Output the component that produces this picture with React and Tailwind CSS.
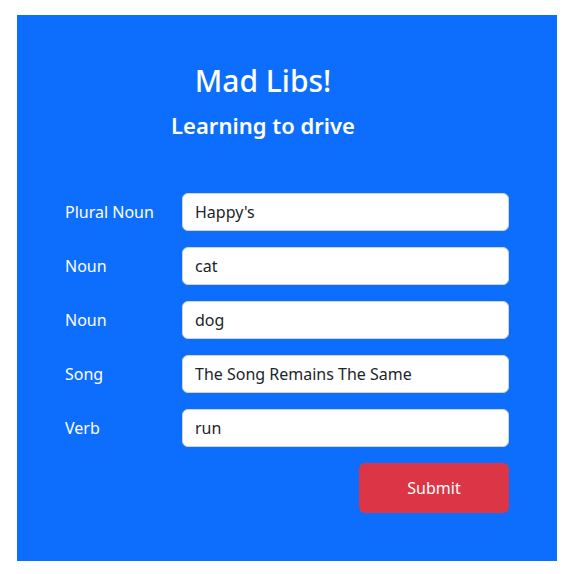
import { useState } from 'react'

const FIELDS = [
  { label: 'Plural Noun', value: "Happy's" },
  { label: 'Noun', value: 'cat' },
  { label: 'Noun', value: 'dog' },
  { label: 'Song', value: 'The Song Remains The Same' },
  { label: 'Verb', value: 'run' },
]

export default function App() {
  const [values, setValues] = useState(FIELDS.map(f => f.value))

  return (
    <div className="min-h-screen bg-white pt-[15px] pl-[17px] font-['Noto_Sans',sans-serif]">
      <div className="w-[540px] h-[546px] bg-[#0d6efd] text-white px-[48px] pt-[47px]">
        {/* Header */}
        <div className="-ml-[48px] text-center">
          <h1 className="text-[30px] leading-[38px] font-medium mb-[11px]">Mad Libs!</h1>
          <h2 className="text-[22px] leading-[29px] font-semibold">Learning to drive</h2>
        </div>

        {/* Form */}
        <form className="mt-[53px] flex flex-col gap-[16px]" onSubmit={e => e.preventDefault()}>
          {FIELDS.map((f, i) => (
            <div key={i} className="flex items-center">
              <label className="w-[117px] text-[16px]">{f.label}</label>
              <input
                value={values[i]}
                onChange={e => setValues(v => v.map((x, j) => (j === i ? e.target.value : x)))}
                className="flex-1 h-[38px] bg-white border border-[#ced4da] rounded-[6px] px-[12px] text-[16px] text-[#212529] outline-none"
              />
            </div>
          ))}
          <div className="flex justify-end">
            <button type="submit" className="w-[150px] h-[50px] bg-[#dc3545] rounded-[6px] text-[16px] text-white">
              Submit
            </button>
          </div>
        </form>
      </div>
    </div>
  )
}
